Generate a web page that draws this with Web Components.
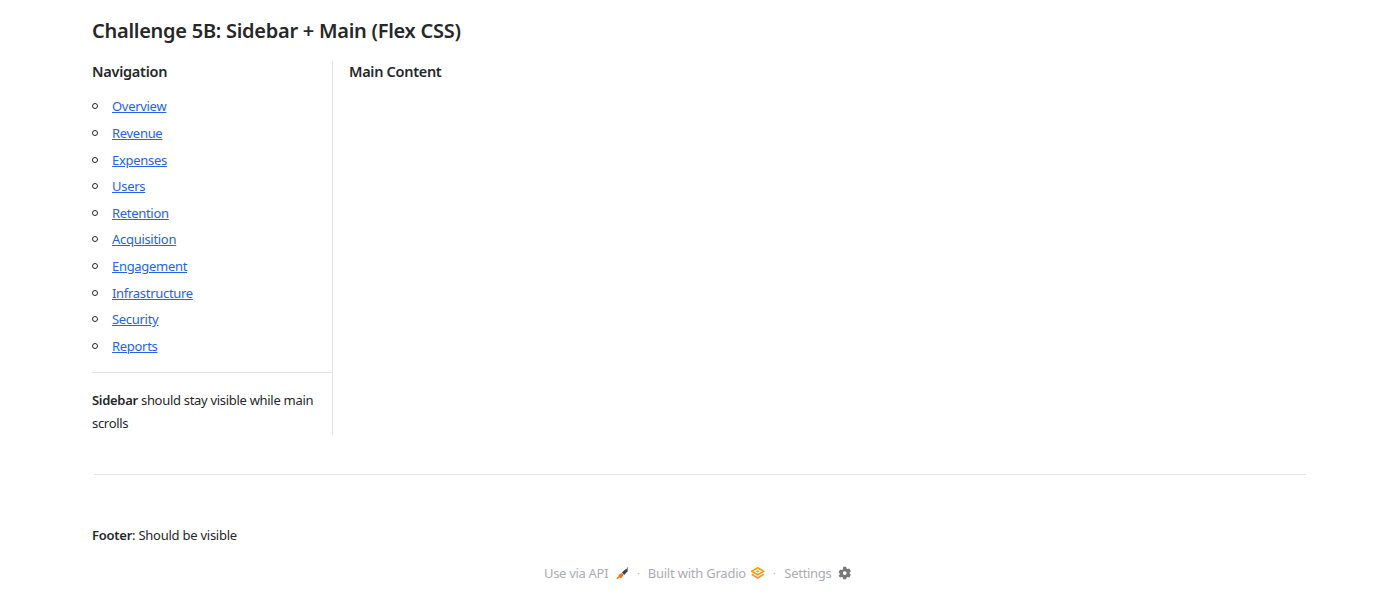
<!DOCTYPE html>
<html><head><meta charset="utf-8"><style>
html,body{margin:0;background:#fff}
body{font-family:"Noto Sans",sans-serif;color:#27272a}
</style></head><body>
<app-page></app-page>
<template id="t-page"><style>
:host{display:flex;flex-direction:column;width:1216px;height:600px;margin:0 auto 0 92px;font-size:13px}
h1{font-size:20px;line-height:26px;font-weight:600;margin:0;padding-top:18px;height:43px;box-sizing:content-box;letter-spacing:-.27px}
.row{display:flex;align-items:stretch;height:374px}
hr{border:0;border-top:1px solid #e4e4e7;margin:39px 2px 0;height:0}
.foot{margin-top:49px;line-height:22px;letter-spacing:-.25px}
b{font-weight:600}
</style>
<h1>Challenge 5B: Sidebar + Main (Flex CSS)</h1>
<div class="row"><side-bar></side-bar><main-pane></main-pane></div>
<hr>
<div class="foot"><b>Footer</b>: Should be visible</div>
<site-footer></site-footer>
</template>
<template id="t-side"><style>
:host{display:flex;flex-direction:column;width:241px;box-sizing:border-box;border-right:1px solid #e4e4e7;letter-spacing:-.3px}
h3{font-size:14.5px;font-weight:600;line-height:20px;margin:0;letter-spacing:-.25px}
ul{list-style:none;margin:14.2px 0 0;padding:0;display:flex;flex-direction:column;gap:4.67px}
.note{border-top:1px solid #e4e4e7;margin-top:14.8px;padding-top:16px;line-height:23px;padding-right:10px}
b{font-weight:600}
</style>
<h3>Navigation</h3>
<ul>
<nav-item>Overview</nav-item><nav-item>Revenue</nav-item><nav-item>Expenses</nav-item><nav-item>Users</nav-item><nav-item>Retention</nav-item><nav-item>Acquisition</nav-item><nav-item>Engagement</nav-item><nav-item>Infrastructure</nav-item><nav-item>Security</nav-item><nav-item>Reports</nav-item>
</ul>
<div class="note"><b>Sidebar</b> <span>should stay visible while main</span> <span>scrolls</span></div>
</template>
<template id="t-item"><style>
:host{display:flex;align-items:center;height:22px;line-height:22px}
i{width:6px;height:6px;border:1px solid #27272a;border-radius:50%;box-sizing:border-box;margin-right:14px;flex:none}
a{color:#2563eb;text-decoration:underline;text-underline-offset:1px}
</style><i></i><a href="#"><slot></slot></a></template>
<template id="t-main"><style>
:host{display:block;padding-left:16px}
h3{font-size:14.5px;font-weight:600;line-height:20px;margin:0;letter-spacing:-.3px}
</style><h3>Main Content</h3></template>
<template id="t-foot"><style>
:host{display:flex;justify-content:center;align-items:center;margin-top:16px;height:22px;color:#acacb3;font-size:13px;letter-spacing:-.3px;white-space:nowrap;transform:translateX(-2.3px)}
.d{margin:0 8px;font-size:10px}
.d.r{margin-right:9px}
svg{display:block}
.a{display:flex;align-items:center;gap:6px}
.u{gap:7px;letter-spacing:-.3px}
.g{gap:5px;letter-spacing:-.22px}
</style>
<span class="a u">Use via API <svg width="14" height="14" viewBox="0 0 14 14"><path d="M.8 13.300l1.700-.6 1.300-1.400-1.100-1.100-1.300 1.300z" fill="#f97316"/><path d="M3 8.700L6 7l1.800 1.800-1.700 3-1.700.2-1.600-1.600z" fill="#f97316"/><path d="M6.200 6.500L10 3.300l1.500-.3.600.6-.3 1.700L8.500 9z" fill="#374151"/><path d="M11.200 1.600l1.400-.2-.2 1.400-.7.300-.8-.8z" fill="#6b7280"/></svg></span>
<span class="d">·</span>
<span class="a g">Built with Gradio <svg width="14" height="12" viewBox="0 0 14 12"><path d="M7 .8L13 4.300 7 7.800 1 4.300z" fill="none" stroke="#f59e0b" stroke-width="1.600"/><path d="M1 7.300L7 11l6-3.700" fill="none" stroke="#fb923c" stroke-width="1.600"/><path d="M5 4.300l2-1.100 2 1.100-2 1.100z" fill="#f59e0b"/></svg></span>
<span class="d r">·</span>
<span class="a">Settings <svg width="14" height="14" viewBox="0 0 14 14"><path fill="#77777c" fill-rule="evenodd" d="M5.500.8h3l.4 1.700 1 .6 1.700-.5 1.500 2.600-1.200 1.200v1.200l1.200 1.200-1.500 2.600-1.700-.5-1 .6-.4 1.700h-3l-.4-1.700-1-.6-1.700.5L.9 9.800l1.200-1.200V7.400L.9 6.200 2.400 3.600l1.700.5 1-.6zM7 5.200a1.900 1.900 0 100 3.800 1.900 1.900 0 000-3.800z"/></svg></span>
</template>
<script>
function def(n,t){customElements.define(n,class extends HTMLElement{constructor(){super();this.attachShadow({mode:'open'}).appendChild(document.getElementById(t).content.cloneNode(true))}})}
def('nav-item','t-item');def('side-bar','t-side');def('main-pane','t-main');def('site-footer','t-foot');def('app-page','t-page');
</script>
</body></html>
